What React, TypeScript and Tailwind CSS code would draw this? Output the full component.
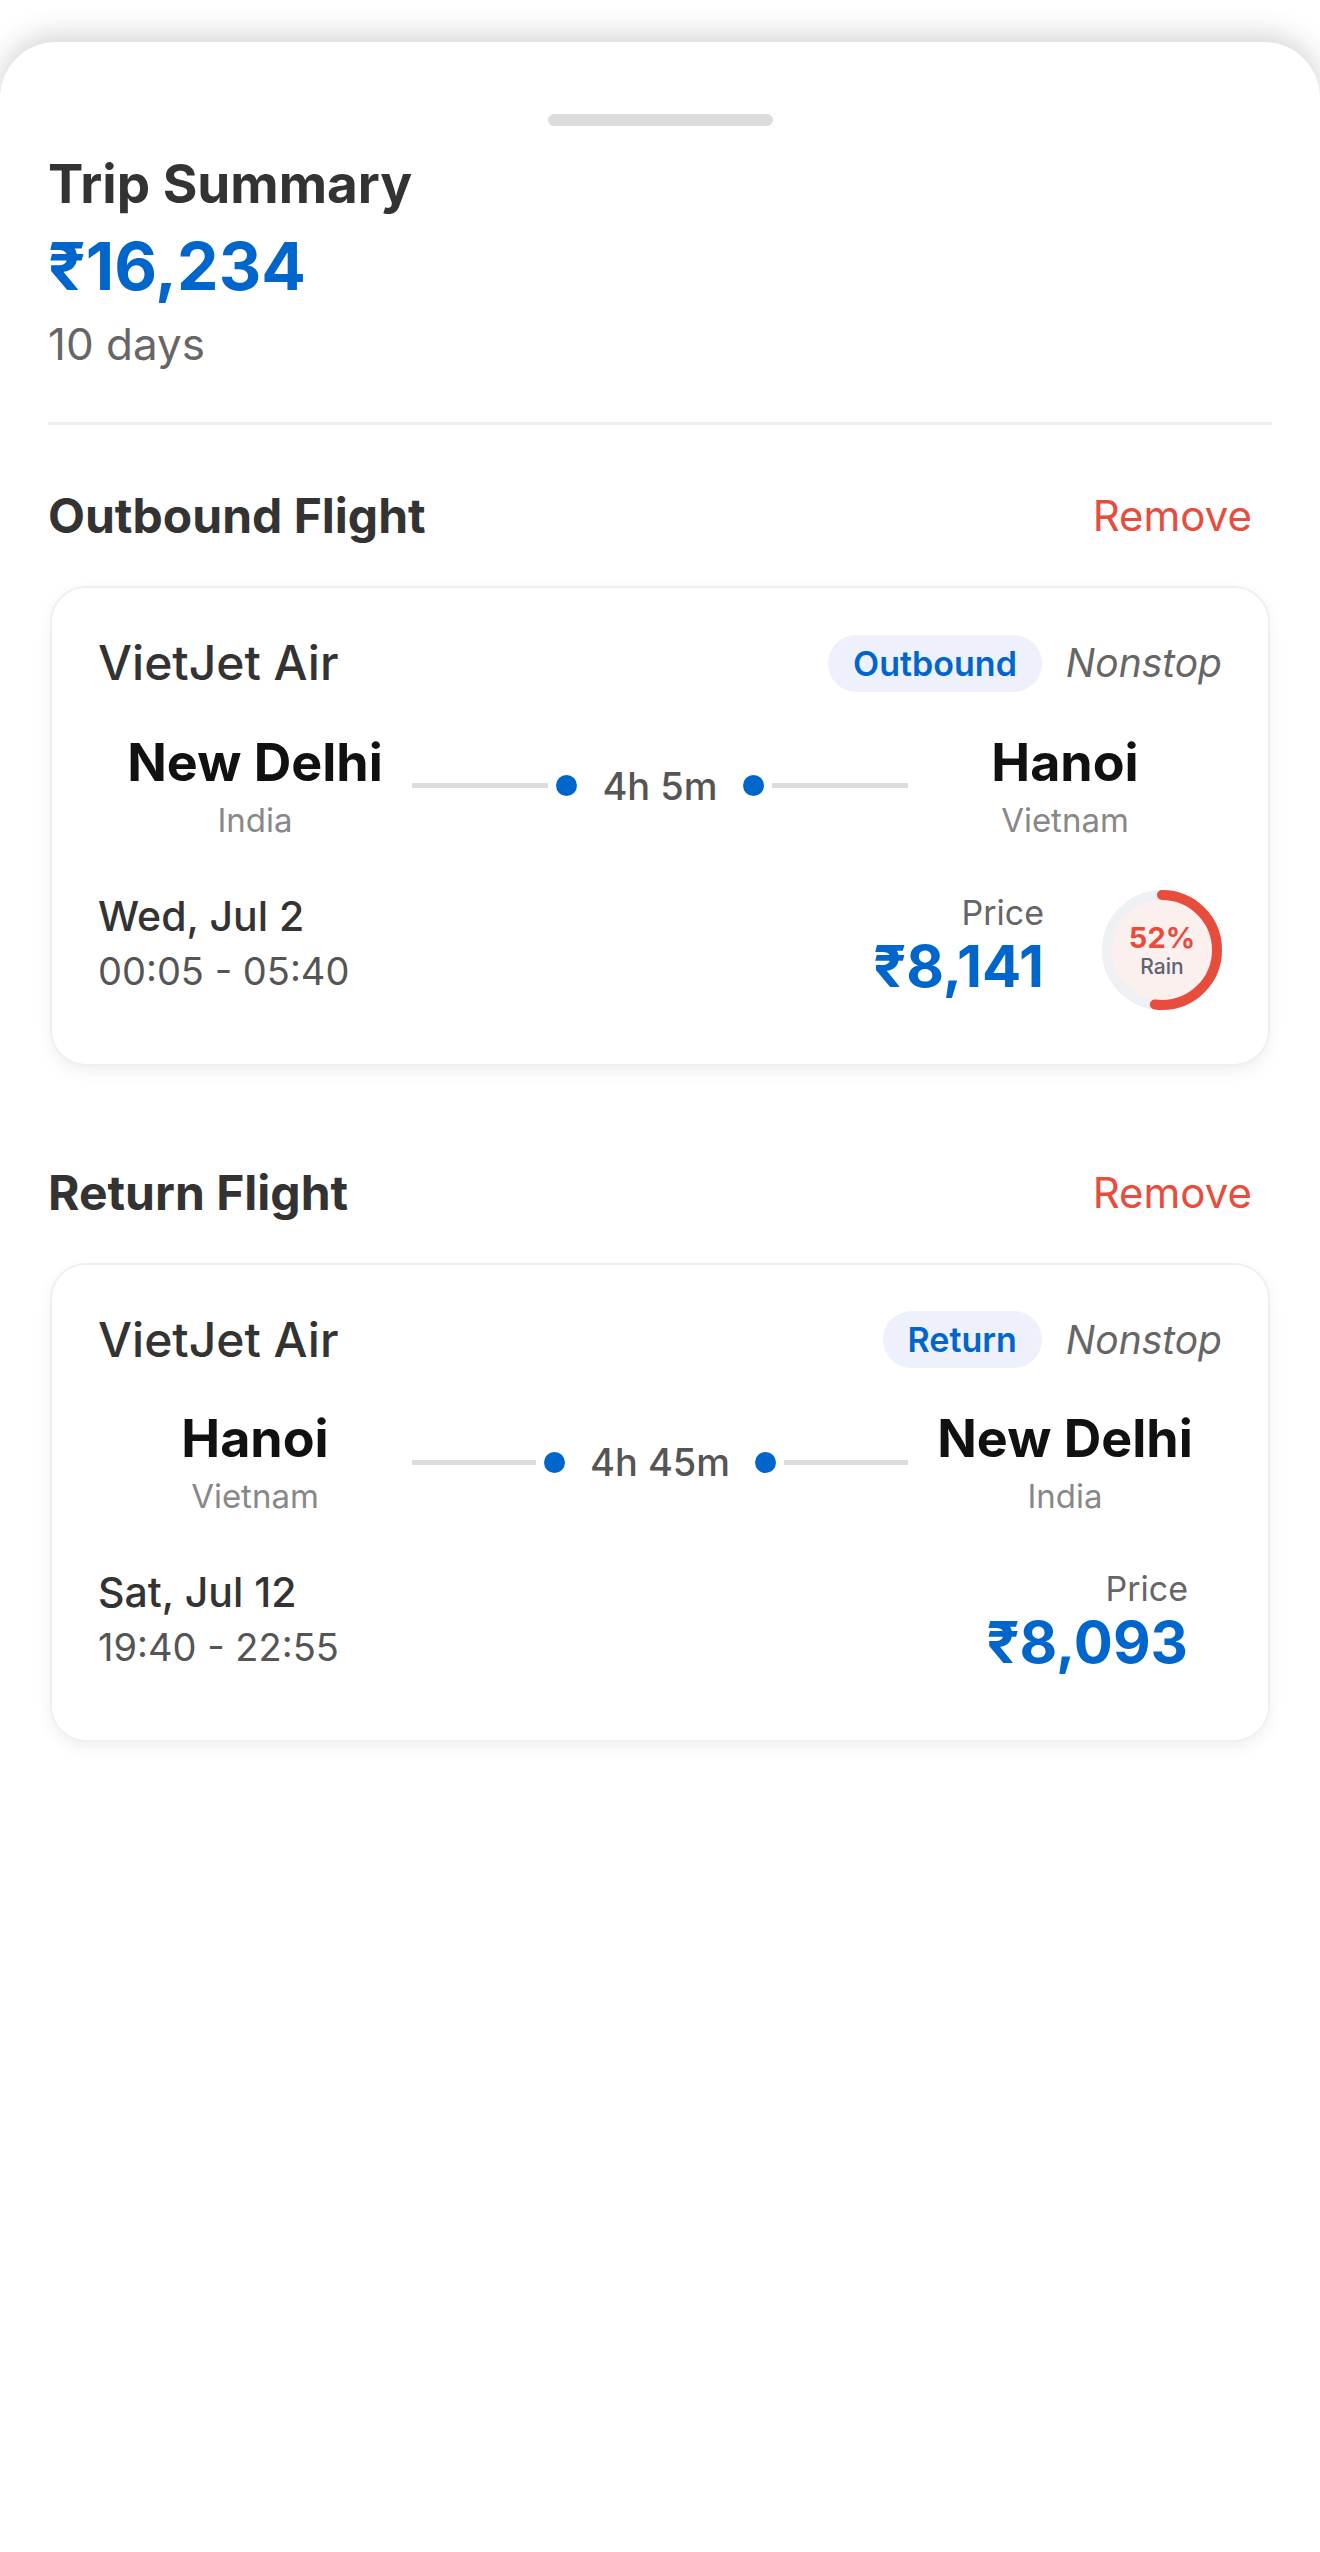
type Flight = {
  title: string
  airline: string
  tag: string
  from: { city: string; country: string }
  to: { city: string; country: string }
  duration: string
  date: string
  time: string
  price: string
  rain?: number
}

const flights: Flight[] = [
  {
    title: "Outbound Flight",
    airline: "VietJet Air",
    tag: "Outbound",
    from: { city: "New Delhi", country: "India" },
    to: { city: "Hanoi", country: "Vietnam" },
    duration: "4h 5m",
    date: "Wed, Jul 2",
    time: "00:05 - 05:40",
    price: "₹8,141",
    rain: 52,
  },
  {
    title: "Return Flight",
    airline: "VietJet Air",
    tag: "Return",
    from: { city: "Hanoi", country: "Vietnam" },
    to: { city: "New Delhi", country: "India" },
    duration: "4h 45m",
    date: "Sat, Jul 12",
    time: "19:40 - 22:55",
    price: "₹8,093",
  },
]

const RainRing = ({ value }: { value: number }) => {
  const r = 55
  const c = 2 * Math.PI * r
  return (
    <div className="relative ml-[24px] h-[120px] w-[120px]">
      <svg width="120" height="120" viewBox="0 0 120 120" className="absolute inset-0">
        <circle cx="60" cy="60" r={r} fill="#fcf0ef" stroke="#eef0f3" strokeWidth="10" />
        <circle
          cx="60"
          cy="60"
          r={r}
          fill="none"
          stroke="#e74c3c"
          strokeWidth="10"
          strokeLinecap="round"
          strokeDasharray={`${(c * value) / 100} ${c}`}
          transform="rotate(-90 60 60)"
        />
      </svg>
      <div className="absolute inset-0 flex flex-col items-center justify-center">
        <div className="text-[29px] font-bold leading-[34px] text-[#e74c3c]">{value}%</div>
        <div className="text-[21px] font-medium leading-[24px] text-[#5f6272]">Rain</div>
      </div>
    </div>
  )
}

const City = ({ city, country }: { city: string; country: string }) => (
  <div className="flex flex-col items-center">
    <div className="text-[52px] font-bold leading-[62px] text-[#111]">{city}</div>
    <div className="mt-[6px] text-[33px] leading-[40px] text-[#888]">{country}</div>
  </div>
)

const FlightSection = ({ flight, first }: { flight: Flight; first: boolean }) => (
  <section className={first ? "mt-[62px]" : "mt-[98px]"}>
    <div className="flex items-center justify-between">
      <h2 className="text-[48px] font-bold leading-[58px] text-[#333]">{flight.title}</h2>
      <button className="mr-[20px] text-[42px] leading-[50px] text-[#e74c3c]">Remove</button>
    </div>

    <div className="mx-[2px] mt-[41px] rounded-[36px] border-2 border-[#f0f0f0] bg-white px-[46px] pb-[54px] pt-[46px] shadow-[0_6px_16px_rgba(0,0,0,0.06)]">
      <div className="flex items-center justify-between">
        <div className="text-[48px] font-medium leading-[58px] text-[#333]">{flight.airline}</div>
        <div className="flex items-center gap-[24px]">
          <span className="flex h-[57px] items-center rounded-full bg-[#eef0fc] px-[25px] text-[34px] font-semibold text-[#0066cc]">
            {flight.tag}
          </span>
          <span className="text-[39px] italic text-[#666]">Nonstop</span>
        </div>
      </div>

      <div className="mt-[39px] grid grid-cols-[314px_1fr_314px] items-center">
        <City {...flight.from} />
        <div className="flex items-center">
          <div className="h-[5px] flex-1 bg-[#dddddd]" />
          <div className="ml-[8px] h-[21px] w-[21px] rounded-full bg-[#0066cc]" />
          <div className="mx-[25px] text-[38px] font-medium leading-[46px] text-[#555]">{flight.duration}</div>
          <div className="mr-[8px] h-[21px] w-[21px] rounded-full bg-[#0066cc]" />
          <div className="h-[5px] flex-1 bg-[#dddddd]" />
        </div>
        <City {...flight.to} />
      </div>

      <div className="mt-[50px] flex h-[120px] items-start justify-between">
        <div className="mt-[2px]">
          <div className="text-[41px] font-medium leading-[48px] text-[#333]">{flight.date}</div>
          <div className="mt-[8px] text-[38px] leading-[46px] text-[#555]">{flight.time}</div>
        </div>
        <div className="flex items-start">
          <div className="mr-[34px] mt-[3px] text-right">
            <div className="text-[34px] leading-[40px] text-[#666]">Price</div>
            <div className="text-[58px] font-bold leading-[66px] text-[#0066cc]">{flight.price}</div>
          </div>
          {flight.rain !== undefined && <RainRing value={flight.rain} />}
        </div>
      </div>
    </div>
  </section>
)

export default function App() {
  return (
    <div className="flex min-h-[2552px] flex-col bg-white font-['Inter','Noto_Sans',sans-serif]">
      <div className="mt-[42px] flex-1 rounded-t-[56px] bg-white px-[48px] shadow-[0_-6px_30px_rgba(0,0,0,0.18)]">
        <div className="mx-auto mt-[72px] h-[12px] w-[225px] rounded-full bg-[#dddddd]" />

        <h1 className="mt-[26px] text-[53px] font-bold leading-[64px] text-[#333]">Trip Summary</h1>
        <div className="mt-[12px] text-[66px] font-bold leading-[76px] text-[#0066cc]">₹16,234</div>
        <div className="mt-[14px] text-[44px] leading-[52px] text-[#666]">10 days</div>

        <div className="mt-[52px] h-[3px] bg-[#eeeeee]" />

        {flights.map((f, i) => (
          <FlightSection key={f.title} flight={f} first={i === 0} />
        ))}
      </div>
    </div>
  )
}
